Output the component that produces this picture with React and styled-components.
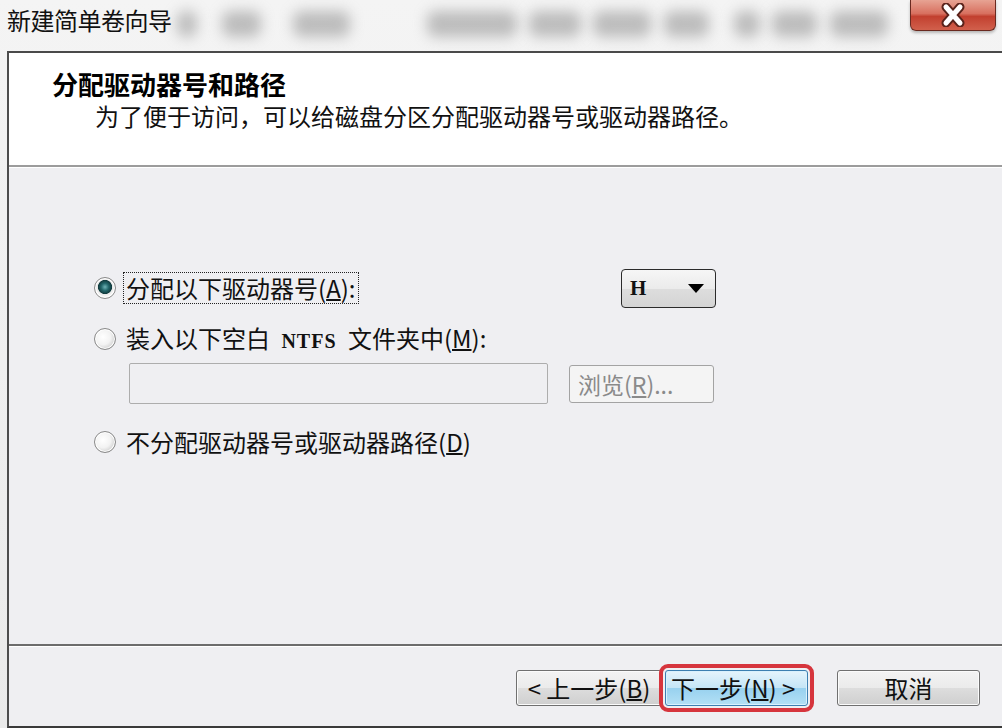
import React from "react";
import styled, { createGlobalStyle } from "styled-components";

const GlobalStyle = createGlobalStyle`
  html, body {
    margin: 0;
    padding: 0;
    background: #f1f1f1;
  }
  body {
    font-family: "Noto Sans CJK SC", "Noto Sans", sans-serif;
  }
`;

const blobs = [
  { left: 185, width: 20 },
  { left: 230, width: 39 },
  { left: 301, width: 57 },
  { left: 435, width: 90 },
  { left: 537, width: 52 },
  { left: 601, width: 58 },
  { left: 672, width: 45 },
  { left: 742, width: 26 },
  { left: 780, width: 45 },
  { left: 838, width: 58 },
];

export default function App() {
  return (
    <>
      <GlobalStyle />
      <Janela>
        <BarraTitulo>
          <Titulo>新建简单卷向导</Titulo>
          <Borrao>
            {blobs.map((b, i) => (
              <Mancha key={i} style={{ left: b.left - 180, width: b.width }} />
            ))}
          </Borrao>
          <Fechar>
            <svg width="34" height="24" viewBox="0 0 34 24">
              <path d="M10 4 L24 20 M24 4 L10 20" stroke="#5b231b" strokeWidth="9" strokeLinecap="round" />
              <path d="M10 4 L24 20 M24 4 L10 20" stroke="#ffffff" strokeWidth="5" strokeLinecap="round" />
            </svg>
          </Fechar>
        </BarraTitulo>

        <Dialogo>
          <Cabecalho>
            <TituloPasso>分配驱动器号和路径</TituloPasso>
            <Subtitulo>为了便于访问，可以给磁盘分区分配驱动器号或驱动器路径。</Subtitulo>
          </Cabecalho>

          <Conteudo>
            <Linha largura="622px" altura="42px">
              <Radio marcado />
              <Rotulo foco>
                分配以下驱动器号(<u>A</u>):
              </Rotulo>
              <Selecao>
                <span>H</span>
                <Seta />
              </Selecao>
            </Linha>

            <Linha largura="622px" altura="32px" topo="14px">
              <Radio />
              <Rotulo>
                装入以下空白 <Mono>NTFS</Mono> 文件夹中(<u>M</u>):
              </Rotulo>
            </Linha>

            <Linha largura="620px" altura="41px" topo="8px">
              <CampoTexto disabled />
              <BotaoProcurar disabled>
                浏览(<u>R</u>)...
              </BotaoProcurar>
            </Linha>

            <Linha largura="622px" altura="32px" topo="22px">
              <Radio />
              <Rotulo>
                不分配驱动器号或驱动器路径(<u>D</u>)
              </Rotulo>
            </Linha>
          </Conteudo>

          <Rodape>
            <Botao largura="146px">&lt; 上一步(<u>B</u>)</Botao>
            <BotaoProximo largura="143px">下一步(<u>N</u>) &gt;</BotaoProximo>
            <Botao largura="143px" esquerda="29px">取消</Botao>
          </Rodape>
        </Dialogo>
      </Janela>
    </>
  );
}

const Janela = styled.div`
  width: 1002px;
  height: 728px;
  display: flex;
  flex-direction: column;
  background: linear-gradient(#f4f4f4, #eaeaea);
  overflow: hidden;
`;

const BarraTitulo = styled.div`
  height: 51px;
  display: flex;
  align-items: flex-start;
`;

const Titulo = styled.div`
  margin: 4px 0 0 7px;
  font-size: 24px;
  line-height: 32px;
  color: #111;
  letter-spacing: -0.5px;
`;

const Borrao = styled.div`
  position: relative;
  flex: 1;
  height: 51px;
`;

const Mancha = styled.div`
  position: absolute;
  top: 11px;
  height: 26px;
  border-radius: 8px;
  background: #868686;
  opacity: 0.5;
  filter: blur(7px);
`;

const Fechar = styled.div`
  width: 84px;
  height: 30px;
  margin-right: 6px;
  display: flex;
  align-items: center;
  justify-content: center;
  border: 1px solid #6a2a20;
  border-top: none;
  border-radius: 0 0 6px 6px;
  background: linear-gradient(#e7a393 0%, #d8705f 45%, #c2402f 55%, #d1604c 100%);
  box-shadow: 0 2px 3px rgba(0, 0, 0, 0.25);
`;

const Dialogo = styled.div`
  flex: 1;
  margin-left: 7px;
  display: flex;
  flex-direction: column;
  border-left: 2px solid #4d4d4d;
  border-top: 2px solid #4a4a4a;
  border-bottom: 2px solid #3a3a3a;
  background: #efeff2;
`;

const Cabecalho = styled.div`
  height: 114px;
  background: #ffffff;
  padding: 17px 0 0 43px;
  box-sizing: border-box;
  border-bottom: 2px solid #9c9c9c;
  box-shadow: 0 1px 0 #ffffff;
`;

const TituloPasso = styled.div`
  font-size: 26px;
  line-height: 28px;
  font-weight: 700;
  color: #000;
`;

const Subtitulo = styled.div`
  margin: 4px 0 0 43px;
  font-size: 24px;
  line-height: 28px;
  color: #111;
`;

const Conteudo = styled.div`
  flex: 1;
  padding: 100px 0 0 85px;
  display: flex;
  flex-direction: column;
`;

const Linha = styled.div`
  width: ${(p) => p.largura};
  height: ${(p) => p.altura};
  margin-top: ${(p) => p.topo || "0"};
  display: flex;
  align-items: center;
`;

const Radio = styled.span`
  width: 20px;
  height: 20px;
  flex-shrink: 0;
  border-radius: 50%;
  border: 1px solid #8a8a8a;
  background: ${(p) =>
    p.marcado
      ? "radial-gradient(circle at 50% 45%, #6fb3b6 0%, #22666a 25%, #123c3f 45%, #e8e8e8 50%, #ffffff 75%, #d6d6d6 100%)"
      : "radial-gradient(circle at 40% 40%, #ffffff 0%, #f3f3f3 45%, #d0d0d0 75%, #bdbdbd 100%)"};
  box-shadow: inset 0 0 0 1px #ffffff;
`;

const Rotulo = styled.span`
  margin: 0 auto 0 7px;
  padding: 0 2px;
  font-size: 24px;
  line-height: 30px;
  color: #111;
  white-space: nowrap;
  border: 1px dotted ${(p) => (p.foco ? "#222" : "transparent")};
  u {
    text-decoration-thickness: 2px;
  }
`;

const Mono = styled.span`
  font-family: "Liberation Serif", "DejaVu Serif", serif;
  font-weight: 700;
  font-size: 20px;
  letter-spacing: 1px;
  margin: 0 6px;
`;

const Selecao = styled.div`
  width: 95px;
  height: 39px;
  box-sizing: border-box;
  border: 1px solid #2b2b2b;
  border-radius: 4px;
  background: linear-gradient(#f6f6f6 0%, #ebebeb 50%, #dddddd 51%, #d4d4d4 100%);
  display: flex;
  align-items: center;
  justify-content: space-between;
  padding: 0 11px 0 8px;
  span {
    font-family: "Liberation Serif", "DejaVu Serif", serif;
    font-weight: 700;
    font-size: 21px;
    color: #111;
  }
`;

const Seta = styled.i`
  width: 0;
  height: 0;
  border-left: 8px solid transparent;
  border-right: 8px solid transparent;
  border-top: 9px solid #000;
`;

const CampoTexto = styled.input`
  margin-left: 35px;
  width: 419px;
  height: 41px;
  box-sizing: border-box;
  border: 1px solid #adadad;
  border-radius: 2px;
  background: #efeff2;
`;

const BotaoProcurar = styled.button`
  margin-left: 21px;
  width: 145px;
  height: 38px;
  border: 1px solid #a3a3a3;
  border-radius: 3px;
  background: #f4f4f4;
  color: #8a8a8a;
  font-family: "Noto Sans CJK SC", sans-serif;
  font-size: 23px;
  text-align: left;
  padding: 0 8px;
`;

const Rodape = styled.div`
  height: 82px;
  border-top: 2px solid #6c6c6c;
  box-shadow: inset 0 1px 0 #ffffff;
  display: flex;
  align-items: flex-start;
  justify-content: flex-end;
  padding: 24px 22px 0 0;
  box-sizing: border-box;
`;

const Botao = styled.button`
  width: ${(p) => p.largura};
  height: 36px;
  margin-left: ${(p) => p.esquerda || "0"};
  border: 1px solid #707070;
  border-radius: 3px;
  background: linear-gradient(#f3f3f3 0%, #ebebeb 50%, #dddddd 51%, #cfcfcf 100%);
  box-shadow: inset 0 0 0 1px #fbfbfb;
  font-family: "Noto Sans CJK SC", sans-serif;
  font-size: 24px;
  line-height: 30px;
  color: #111;
  padding: 0;
  white-space: nowrap;
  u {
    text-decoration-thickness: 2px;
  }
`;

const BotaoProximo = styled(Botao)`
  margin-left: 3px;
  text-align: left;
  padding-left: 5px;
  border-color: #3c7fb1;
  background: linear-gradient(#e5f4fc 0%, #c4e5f6 50%, #98d1ef 51%, #b3e0f5 100%);
  box-shadow: inset 0 0 0 1px #d9f1fd;
  outline: 4px solid #d6353d;
  outline-offset: 2px;
`;
